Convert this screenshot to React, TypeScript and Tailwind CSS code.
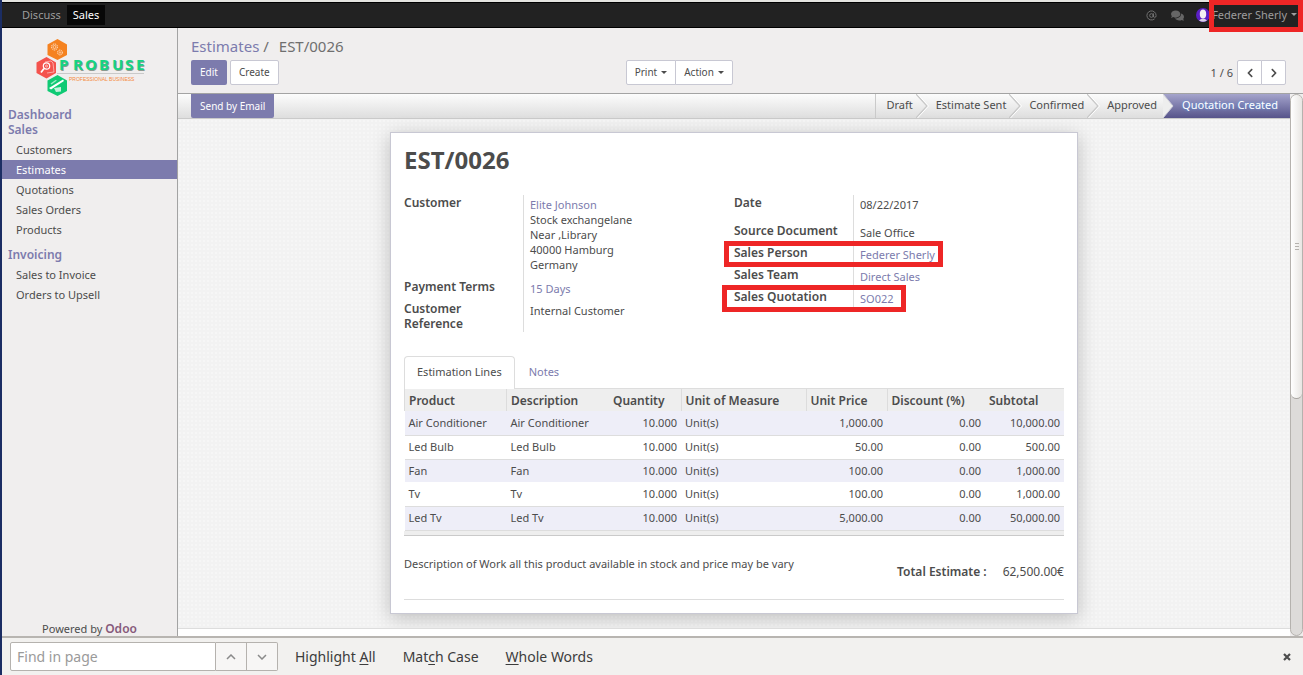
import React from 'react';
import { AtSign } from 'lucide-react';
import { FaChevronLeft, FaChevronRight, FaComments } from 'react-icons/fa';

type Line = { product: string; qty: string; price: string; discount: string; subtotal: string };

const lines: Line[] = [
  { product: 'Air Conditioner', qty: '10.000', price: '1,000.00', discount: '0.00', subtotal: '10,000.00' },
  { product: 'Led Bulb', qty: '10.000', price: '50.00', discount: '0.00', subtotal: '500.00' },
  { product: 'Fan', qty: '10.000', price: '100.00', discount: '0.00', subtotal: '1,000.00' },
  { product: 'Tv', qty: '10.000', price: '100.00', discount: '0.00', subtotal: '1,000.00' },
  { product: 'Led Tv', qty: '10.000', price: '5,000.00', discount: '0.00', subtotal: '50,000.00' },
];

const rowStyles = [
  'h-6 bg-[#eeeef8] border-b border-[#dddddd]',
  'h-6 border-b border-[#dddddd]',
  'h-[23px] bg-[#eeeef8]',
  'h-6 border-b border-[#dddddd]',
  'h-6 bg-[#eeeef8] border-b border-[#dddddd]',
];

function Logo() {
  return (
    <svg width="112" height="60" viewBox="0 0 112 60" role="img" aria-label="Probuse">
      <path d="M21.500 1 31 6.500v10.500l-9.500 5-10-5V6.500z" fill="#f58220" />
      <path d="M10.500 19 20 24.500v10.500l-9.500 5.500-10-5.500V24.500z" fill="#f4524d" />
      <path d="M21.500 37 31 42.500v10.500l-9.500 5-10-5V42.500z" fill="#0fca74" />
      <g fill="none" stroke="#fff" strokeOpacity=".75">
        <circle cx="18.500" cy="9" r="3" strokeDasharray="1.300 .7" />
        <circle cx="18.500" cy="9" r="1.500" strokeWidth=".7" />
        <circle cx="24" cy="14.500" r="2.400" strokeDasharray="1.200 .6" />
        <circle cx="24" cy="14.500" r=".8" strokeWidth=".6" />
      </g>
      <g fill="none" stroke="#fff">
        <path d="m9 24 6-1 2 2 1 9-7 1" strokeWidth=".7" strokeOpacity=".7" />
        <circle cx="10.500" cy="28" r="3.200" strokeWidth="1.200" />
        <circle cx="10.500" cy="28" r="1" strokeWidth=".6" />
        <path d="M8 30.500 5 34.500" strokeWidth="1.700" />
      </g>
      <path d="m13 50 14-8.500 1 1.500-13 8.500z" fill="#fff" />
      <path d="m18 50 7-1v4.500l-5 .5z" fill="#fff" fillOpacity=".75" />
      <path d="m14.500 45.500 5-3.500 1.500.500-5.500 4z" fill="#fff" fillOpacity=".6" />
      <path d="M21 35.500h87" stroke="#c9c9c9" />
      <g className="font-['Noto_Sans',sans-serif] text-[15px] font-bold">
        <text x="24 38 50 64 77 90 101" y="33" fill="#8a9a90" aria-hidden="true">PROBUSE</text>
        <text x="23 37 49 63 76 89 100" y="32" fill="#14d583">PROBUSE</text>
      </g>
      <text x="33" y="43" className="fill-[#f58a3c] font-['Liberation_Sans',sans-serif] text-[5px]">PROFESSIONAL BUSINESS</text>
    </svg>
  );
}

function Caret() {
  return (
    <svg width="6" height="3" viewBox="0 0 6 3" aria-hidden="true">
      <path d="M0 0h6L3 3z" fill="currentColor" />
    </svg>
  );
}

function NavItem({ label, active = false }: { label: string; active?: boolean }) {
  return (
    <a
      href="#"
      className={
        active
          ? 'block h-[19px] bg-[#7c7bad] pl-3.5 leading-[19px] text-white'
          : 'block h-[19px] pl-3.5 leading-[19px] text-[#4c4c4c]'
      }
    >
      {label}
    </a>
  );
}

function Marker({ className }: { className: string }) {
  return <span aria-hidden="true" className={`pointer-events-none absolute z-10 border-[5px] border-[#ee2626] ${className}`} />;
}

function Field({
  label,
  className = 'min-h-[22px]',
  marker,
  children,
}: {
  label: string;
  className?: string;
  marker?: string;
  children: React.ReactNode;
}) {
  return (
    <div className={`relative grid grid-cols-[119px_1fr] ${className}`}>
      <dt className="pr-2 text-[12px] font-semibold">{label}</dt>
      <dd className="border-l border-[#dddddd] pt-0.5 pl-1.5">{children}</dd>
      {marker && <Marker className={marker} />}
    </div>
  );
}

function Chevron() {
  return (
    <svg width="13" height="24" viewBox="0 0 13 24" className="mr-[7px] ml-[3px] shrink-0" aria-hidden="true">
      <path d="M0 0 11 12 0 24" fill="none" stroke="#c9c9c9" strokeWidth="1.500" />
      <path d="M1.500 0 12.500 12 1.500 24" fill="none" stroke="#fff" />
    </svg>
  );
}

const link = 'text-[#7c7bad]';
const thPlain = 'px-1 text-left text-[12px] font-semibold';
const th = 'border-r border-[#dcdcdc] px-1 text-left text-[12px] font-semibold';
const td = 'px-1 pb-px';
const tdNum = 'px-1 pb-px text-right';

export default function App() {
  return (
    <div className="flex min-h-screen flex-col border-l-2 border-[#1b2d63] bg-[#f0eeee] font-['Noto_Sans',sans-serif] text-[11px] leading-[15px] text-[#4c4c4c]">
      <header className="flex h-7 items-stretch border-t-2 border-[#e4e4e0] bg-[#222222] text-[#9d9d9d]">
        <nav className="flex flex-1 items-center border-y border-black pl-3.5">
          <a href="#" className="px-1.5 leading-5">Discuss</a>
          <a href="#" className="bg-[#080808] px-1.5 leading-5 text-white">Sales</a>
        </nav>
        <div className="flex items-center border-y border-black">
          <button type="button" aria-label="Mentions" className="mr-3.5 text-[#777777]"><AtSign size={11} strokeWidth={2} /></button>
          <button type="button" aria-label="Conversations" className="mr-3 text-[#666666]"><FaComments size={13} /></button>
          <svg width="14" height="14" viewBox="0 0 14 14" aria-hidden="true">
            <circle cx="7" cy="7" r="7" fill="#5a1fc4" />
            <ellipse cx="7" cy="6" rx="3.200" ry="4.500" fill="#f3f0f4" />
            <path d="M3 12.500q4-4 8 0Q7 15 3 12.500z" fill="#d9d2e6" />
          </svg>
          <button type="button" className="relative flex h-full items-center gap-1 pr-1.5 pb-0.5 pl-0.5">
            Federer Sherly <Caret />
            <Marker className="-top-[3px] right-0 -bottom-[5px] -left-px" />
          </button>
        </div>
      </header>

      <div className="flex flex-1">
        <aside className="flex w-44 shrink-0 flex-col border-r border-[#a3a3a3]">
          <div className="flex h-[79px] pt-2.5 pl-[34px]"><Logo /></div>
          <nav className="flex-1">
            <h2 className={`pl-1.5 text-[12px] font-semibold ${link}`}>Dashboard</h2>
            <h2 className={`pl-1.5 text-[12px] font-semibold ${link}`}>Sales</h2>
            <div className="mt-[3px] flex flex-col gap-px">
              <NavItem label="Customers" />
              <NavItem label="Estimates" active />
              <NavItem label="Quotations" />
              <NavItem label="Sales Orders" />
              <NavItem label="Products" />
            </div>
            <h2 className={`mt-2 pl-1.5 text-[12px] font-semibold ${link}`}>Invoicing</h2>
            <div className="mt-[3px] flex flex-col gap-px">
              <NavItem label="Sales to Invoice" />
              <NavItem label="Orders to Upsell" />
            </div>
          </nav>
          <p className="text-center">
            Powered by <a href="#" className="text-[12px] font-semibold text-[#875a7b]">Odoo</a>
          </p>
        </aside>

        <main className="flex min-w-0 flex-1 flex-col">
          <div className="flex h-[66px] flex-col border-b border-[#a3a3a3] px-[13px] pt-2">
            <h1 className="flex gap-2.5 text-[15px] leading-5 text-[#6f6f6f]">
              <span><a href="#" className={link}>Estimates</a> /</span>
              <span>EST/0026</span>
            </h1>
            <div className="mt-1 flex items-center text-[10px]">
              <div className="flex flex-[44] gap-[3px]">
                <button type="button" className="h-[25px] rounded-xs bg-[#7c7bad] px-[9px] text-white">Edit</button>
                <button type="button" className="h-[25px] rounded-xs border border-[#c8c8d3] bg-white px-2">Create</button>
              </div>
              <div className="flex">
                <button type="button" className="flex h-[25px] items-center gap-1 rounded-l-xs border border-[#c8c8d3] bg-white px-2">Print <Caret /></button>
                <button type="button" className="-ml-px flex h-[25px] items-center gap-1 rounded-r-xs border border-[#c8c8d3] bg-white px-2">Action <Caret /></button>
              </div>
              <div className="flex flex-[56] items-center justify-end pr-1">
                <span className="mr-1 text-[11px]">1 / 6</span>
                <button type="button" aria-label="Previous" className="flex h-[25px] w-[25px] items-center justify-center rounded-l-xs border border-[#c8c8d3] bg-white"><FaChevronLeft size={10} /></button>
                <button type="button" aria-label="Next" className="-ml-px flex h-[25px] w-[25px] items-center justify-center rounded-r-xs border border-[#c8c8d3] bg-white"><FaChevronRight size={10} /></button>
              </div>
            </div>
          </div>

          <div className="flex flex-1">
            <div className="flex min-w-0 flex-1 flex-col">
              <div className="flex h-[25px] border-b border-[#cacaca] bg-linear-to-b from-[#fcfcfc] to-[#dedede] pl-[13px]">
                <button type="button" className="rounded-b-xs bg-[#7c7bad] px-[9px] text-[10px] text-white">Send by Email</button>
                <ol className="ml-auto flex items-center border-l border-[#cacaca] pl-2.5 leading-[22px]">
                  <li className="flex items-start">Draft<Chevron /></li>
                  <li className="flex items-start">Estimate Sent<Chevron /></li>
                  <li className="flex items-start">Confirmed<Chevron /></li>
                  <li className="flex h-6 items-start pr-1.5">Approved</li>
                  <li className="flex h-full items-start bg-linear-to-b from-[#a5a4cc] to-[#57548a] pr-3 text-white">
                    <svg width="11" height="24" viewBox="0 0 11 24" className="mr-2" aria-hidden="true">
                      <path d="M0 0 10 12 0 24z" fill="#eeeeee" />
                      <path d="M0 0 10 12 0 24" fill="none" stroke="#d0d0d8" />
                    </svg>
                    <span className="[text-shadow:0_0_3px_#5b9be8]">Quotation Created</span>
                  </li>
                </ol>
              </div>

              <div className="flex-1 bg-[#f2f2f2] bg-[radial-gradient(#f6f6f6_1px,transparent_1px)] bg-[size:4px_4px] pt-[13px] pb-3.5">
                <article className="mx-auto w-full max-w-[688px] border border-[#c8c8d3] bg-white px-[13px] pb-[13px] shadow-[0_4px_18px_rgba(0,0,0,0.22)]">
                  <h2 className="pt-3 text-[24px] leading-[30px] font-bold">EST/0026</h2>

                  <div className="mt-5 grid grid-cols-2">
                    <dl>
                      <Field label="Customer" className="h-[84px]">
                        <a href="#" className={link}>Elite Johnson</a>
                        <address className="not-italic">
                          Stock exchangelane<br />Near ,Library<br />40000 Hamburg<br />Germany
                        </address>
                      </Field>
                      <Field label="Payment Terms"><a href="#" className={link}>15 Days</a></Field>
                      <Field label="Customer Reference" className="min-h-[31px]">Internal Customer</Field>
                    </dl>
                    <dl>
                      <Field label="Date" className="h-7">08/22/2017</Field>
                      <Field label="Source Document">Sale Office</Field>
                      <Field label="Sales Person" marker="-top-1 -left-2.5 h-[26px] w-[219px]"><a href="#" className={link}>Federer Sherly</a></Field>
                      <Field label="Sales Team"><a href="#" className={link}>Direct Sales</a></Field>
                      <Field label="Sales Quotation" marker="-top-1 -left-3 h-[27px] w-[184px]"><a href="#" className={link}>SO022</a></Field>
                    </dl>
                  </div>

                  <div role="tablist" className="mt-6 flex h-[33px] border-b border-[#dddddd]">
                    <button type="button" role="tab" aria-selected="true" className="-mb-px rounded-t-sm border border-b-0 border-[#dddddd] bg-white px-3 pb-1">Estimation Lines</button>
                    <button type="button" role="tab" aria-selected="false" className={`px-3.5 pb-0.5 ${link}`}>Notes</button>
                  </div>

                  <table className="w-full table-fixed border-collapse">
                    <colgroup>
                      <col className="w-[102px]" />
                      <col />
                      <col className="w-[72px]" />
                      <col className="w-[125px]" />
                      <col className="w-[81px]" />
                      <col className="w-[98px]" />
                      <col className="w-[79px]" />
                    </colgroup>
                    <thead>
                      <tr className="h-[22px] bg-[#eeeeee]">
                        <th className={`${th} border-l`}>Product</th>
                        <th className={thPlain}>Description</th>
                        <th className={th}>Quantity</th>
                        <th className={th}>Unit of Measure</th>
                        <th className={th}>Unit Price</th>
                        <th className={thPlain}>Discount (%)</th>
                        <th className={thPlain}>Subtotal</th>
                      </tr>
                    </thead>
                    <tbody>
                      {lines.map((line, i) => (
                        <tr key={line.product} className={rowStyles[i]}>
                          <td className={td}>{line.product}</td>
                          <td className={td}>{line.product}</td>
                          <td className={tdNum}>{line.qty}</td>
                          <td className={td}>Unit(s)</td>
                          <td className={tdNum}>{line.price}</td>
                          <td className={tdNum}>{line.discount}</td>
                          <td className={tdNum}>{line.subtotal}</td>
                        </tr>
                      ))}
                    </tbody>
                  </table>
                  <div className="h-[5px] border-b border-[#cacaca] bg-[#eeeeee]" />

                  <div className="flex h-16 justify-between border-b border-[#dddddd] pt-5">
                    <p>Description of Work all this product available in stock and price may be vary</p>
                    <p className="mt-2 flex gap-4 text-[12px]"><span className="font-semibold">Total Estimate :</span><span>62,500.00€</span></p>
                  </div>
                </article>
              </div>
              <div className="h-2 border-t border-[#dddddd] bg-white" />
            </div>

            <div aria-hidden="true" className="w-[13px] shrink-0 rounded-full border border-[#b5b2ae] bg-[#dddbd9]">
              <div className="flex h-[304px] flex-col items-center justify-center gap-0.5 rounded-full border-b border-[#a9a6a2] bg-linear-to-r from-white to-[#e8e6e3]">
                <span className="h-px w-1 bg-[#b5b2ae]" />
                <span className="h-px w-1 bg-[#b5b2ae]" />
                <span className="h-px w-1 bg-[#b5b2ae]" />
              </div>
            </div>
          </div>
        </main>
      </div>

      <footer className="flex h-[39px] items-center border-t-2 border-[#b8b5b1] bg-[#f2f1ef] pr-3 pl-2 text-[14px] text-[#3c3c3c]">
        <input aria-label="Find in page" placeholder="Find in page" className="h-[29px] w-[206px] rounded-l-xs border border-[#b5b2ae] bg-white px-1.5 placeholder:text-[#9a9a9a]" />
        <button type="button" aria-label="Previous match" className="flex h-[29px] w-[31px] items-center justify-center border-y border-r border-[#b5b2ae] bg-[#f7f6f5] text-[#8a8a8a]">
          <svg width="10" height="6" viewBox="0 0 10 6" aria-hidden="true"><path d="m1 5 4-4 4 4" fill="none" stroke="currentColor" strokeWidth="1.500" /></svg>
        </button>
        <button type="button" aria-label="Next match" className="flex h-[29px] w-[31px] items-center justify-center rounded-r-xs border-y border-r border-[#b5b2ae] bg-[#f7f6f5] text-[#8a8a8a]">
          <svg width="10" height="6" viewBox="0 0 10 6" aria-hidden="true"><path d="m1 1 4 4 4-4" fill="none" stroke="currentColor" strokeWidth="1.500" /></svg>
        </button>
        <button type="button" className="ml-[17px]">Highlight <u className="underline-offset-2">A</u>ll</button>
        <button type="button" className="ml-[27px]">Mat<u className="underline-offset-2">c</u>h Case</button>
        <button type="button" className="ml-[27px]"><u className="underline-offset-2">W</u>hole Words</button>
        <button type="button" aria-label="Close" className="ml-auto">
          <svg width="8" height="8" viewBox="0 0 8 8" aria-hidden="true"><path d="m1 1 6 6M7 1 1 7" stroke="#4c4c4c" strokeWidth="2.200" /></svg>
        </button>
      </footer>
    </div>
  );
}
